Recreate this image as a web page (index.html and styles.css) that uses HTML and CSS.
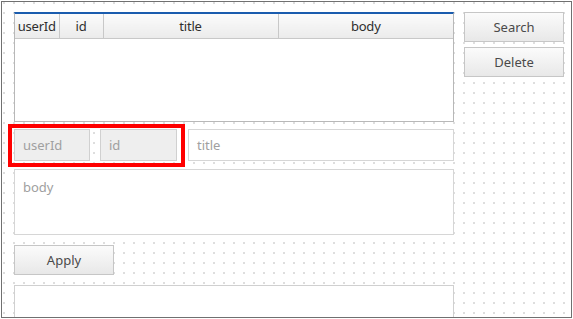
FILE: index.html
```html
<!DOCTYPE html>
<html>
<head>
<meta charset="utf-8">
<link rel="stylesheet" href="styles.css">
</head>
<body>
<div class="frame">
  <div class="layout">
    <div class="main">
      <div class="grid">
        <table class="data">
          <thead>
            <tr>
              <th class="c-user">userId</th>
              <th class="c-id">id</th>
              <th class="c-title">title</th>
              <th class="c-body">body</th>
            </tr>
          </thead>
        </table>
      </div>
      <div class="fields">
        <div class="field field-user readonly">userId</div>
        <div class="field field-id readonly">id</div>
        <div class="field field-title">title</div>
      </div>
      <div class="field area">body</div>
      <div class="apply-row"><button class="btn">Apply</button></div>
      <div class="output"></div>
    </div>
    <div class="side">
      <button class="btn">Search</button>
      <button class="btn">Delete</button>
    </div>
  </div>
  <div class="highlight"></div>
</div>
</body>
</html>
```
FILE: styles.css
```css
* { box-sizing: border-box; }
html, body { margin: 0; padding: 0; background: #fff; }
body {
  font-family: "Noto Sans", "Open Sans", sans-serif;
  font-size: 13px;
  color: #333;
}
.frame {
  position: relative;
  margin: 1px 0 0 1px;
  width: 571px;
  height: 317px;
  border: 1px solid #707070;
  overflow: hidden;
  padding: 10px 0 0 12px;
  background-color: #dedede;
  background-image:
    linear-gradient(90deg, #fff 8px, transparent 8px),
    linear-gradient(180deg, #fff 8px, transparent 8px);
  background-size: 10px 10px;
  background-position: 3px 2px;
}
.layout { display: flex; gap: 10px; align-items: flex-start; }
.main { width: 440px; display: flex; flex-direction: column; }
.side { width: 100px; display: flex; flex-direction: column; gap: 5px; }

.grid {
  height: 110px;
  background: #fff;
  border: 1px solid #b8b8b8;
  border-top: 2px solid #1a5cae;
}
.data { width: 100%; border-collapse: collapse; table-layout: fixed; }
.data th {
  height: 24px;
  padding: 0;
  font-weight: normal;
  font-size: 13px;
  letter-spacing: -0.2px;
  color: #2e2e2e;
  text-align: center;
  background: linear-gradient(#fbfbfb, #ebebeb);
  border-bottom: 1px solid #c8c8c8;
  border-right: 1px solid #c8c8c8;
}
.data th:last-child { border-right: none; }
.c-user { width: 44px; }
.c-id { width: 44px; }
.c-title { width: 175px; }

.fields { display: flex; gap: 10px; margin-top: 7px; }
.field {
  height: 32px;
  border: 1px solid #d6d6d6;
  background: #fff;
  color: #a0a0a0;
  padding: 0 0 0 8px;
  display: flex;
  align-items: center;
}
.field.readonly { background: #eeeeee; border-color: #d0d0d0; }
.field-user { width: 76px; }
.field-id { width: 77px; }
.field-title { flex: 1; margin-left: 1px; }
.area {
  margin-top: 8px;
  height: 66px;
  align-items: flex-start;
  padding-top: 8px;
}
.apply-row { margin-top: 10px; display: flex; }
.btn {
  width: 100px;
  height: 30px;
  border: 1px solid #c6c6c6;
  background: linear-gradient(#fbfbfb, #e8e8e8);
  font-family: "Noto Sans", "Open Sans", sans-serif;
  font-size: 13px;
  color: #4a4a4a;
  padding: 0;
}
.output {
  margin-top: 10px;
  height: 60px;
  background: #fff;
  border: 1px solid #d0d0d0;
}
.highlight {
  position: absolute;
  left: 6px;
  top: 122px;
  width: 177px;
  height: 43px;
  border: 4px solid #ff0000;
}
```
